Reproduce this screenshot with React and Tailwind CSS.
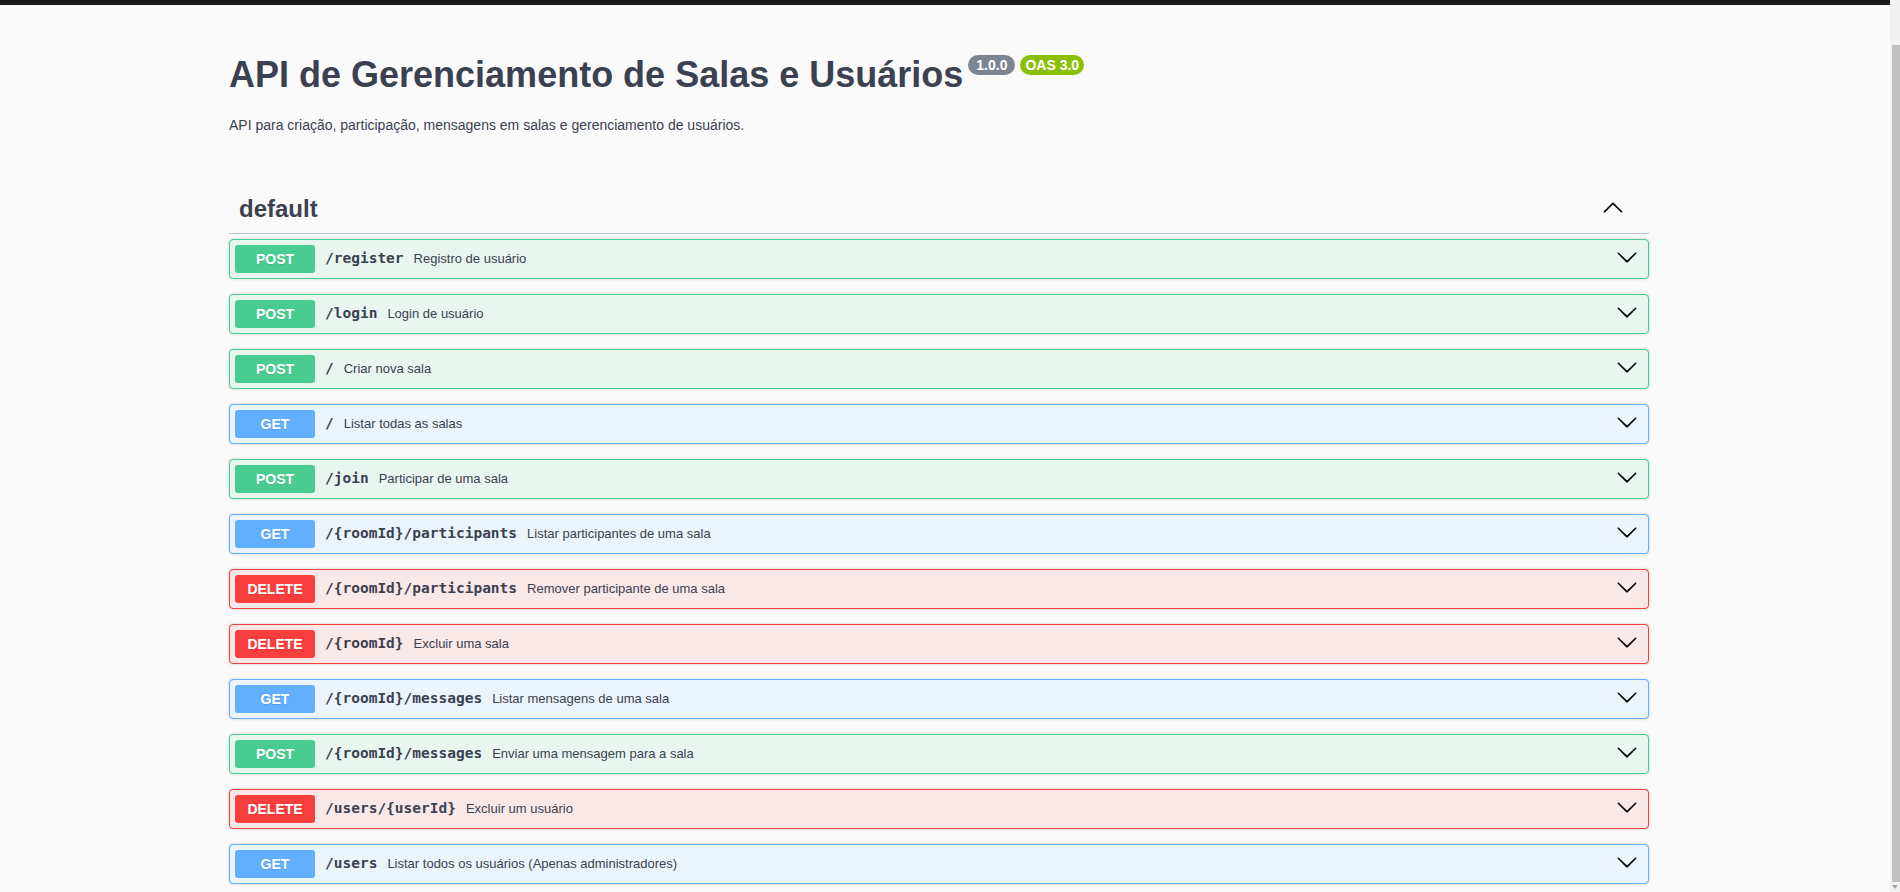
import React from "react";

const ops = [
  { m: "POST", p: "/register", d: "Registro de usuário" },
  { m: "POST", p: "/login", d: "Login de usuário" },
  { m: "POST", p: "/", d: "Criar nova sala" },
  { m: "GET", p: "/", d: "Listar todas as salas" },
  { m: "POST", p: "/join", d: "Participar de uma sala" },
  { m: "GET", p: "/{roomId}/participants", d: "Listar participantes de uma sala" },
  { m: "DELETE", p: "/{roomId}/participants", d: "Remover participante de uma sala" },
  { m: "DELETE", p: "/{roomId}", d: "Excluir uma sala" },
  { m: "GET", p: "/{roomId}/messages", d: "Listar mensagens de uma sala" },
  { m: "POST", p: "/{roomId}/messages", d: "Enviar uma mensagem para a sala" },
  { m: "DELETE", p: "/users/{userId}", d: "Excluir um usuário" },
  { m: "GET", p: "/users", d: "Listar todos os usuários (Apenas administradores)" },
];

const styles = {
  POST: { row: "border-[#49cc90] bg-[#e8f6f0]", btn: "bg-[#49cc90]" },
  GET: { row: "border-[#61affe] bg-[#ebf3fb]", btn: "bg-[#61affe]" },
  DELETE: { row: "border-[#f93e3e] bg-[#fae7e7]", btn: "bg-[#f93e3e]" },
};

function Down() {
  return (
    <svg width="22" height="22" viewBox="0 0 20 20" fill="#000" className="-mt-[5px]">
      <path d="M17.418 6.109c.272-.268.709-.268.979 0s.271.701 0 .969l-7.908 7.83c-.27.268-.707.268-.979 0l-7.908-7.83c-.27-.268-.27-.701 0-.969.271-.268.709-.268.979 0L10 13.25l7.418-7.141z" />
    </svg>
  );
}

function Up() {
  return (
    <svg width="22" height="22" viewBox="0 0 20 20" fill="#000" className="-mt-[4px]">
      <path d="M17.418 14.908c.272.268.709.268.979 0s.271-.701 0-.969l-7.908-7.83c-.27-.268-.707-.268-.979 0l-7.908 7.83c-.27.268-.27.701 0 .969.271.268.709.268.979 0L10 7.767l7.418 7.141z" />
    </svg>
  );
}

function Row({ m, p, d }) {
  const s = styles[m];
  return (
    <div
      className={`mb-[15px] flex h-[40px] shrink-0 items-center rounded-[4px] border pl-[5px] pr-[10px] shadow-[0_0_3px_rgba(0,0,0,0.19)] ${s.row}`}
    >
      <div
        className={`flex h-[28px] w-[80px] shrink-0 items-center justify-center rounded-[3px] text-[14px] font-bold text-white [text-shadow:0_1px_0_rgba(0,0,0,0.1)] ${s.btn}`}
      >
        {m}
      </div>
      <span className="px-[10px] font-['DejaVu_Sans_Mono',monospace] text-[14.5px] font-bold text-[#3b4151]">
        {p}
      </span>
      <span className="flex-1 text-[13px] text-[#3b4151]">{d}</span>
      <Down />
    </div>
  );
}

export default function App() {
  return (
    <div className="flex h-[892px] w-[1900px] overflow-hidden font-['Liberation_Sans',Arial,sans-serif]">
      <div className="flex min-h-0 flex-1 flex-col overflow-hidden bg-[#fafafa]">
        <div className="h-[5px] shrink-0 bg-[#1b1b1b]" />
        <div className="ml-[229px] flex w-[1420px] shrink-0 flex-col">
          <div className="mt-[50px] flex items-start">
            <h1 className="text-[36px] font-bold leading-[40px] text-[#3b4151]">
              API de Gerenciamento de Salas e Usuários
            </h1>
            <span className="ml-[5px] flex h-[20px] items-center rounded-full bg-[#7d8492] px-[8px] text-[14px] font-bold text-white">
              1.0.0
            </span>
            <span className="ml-[5px] flex h-[20px] items-center rounded-full bg-[#89bf04] px-[5px] text-[14px] font-bold text-white">
              OAS 3.0
            </span>
          </div>
          <p className="mt-[22px] text-[14px] leading-[16px] text-[#3b4151]">
            API para criação, participação, mensagens em salas e gerenciamento de usuários.
          </p>
          <div className="mt-[52px] mb-[5px] flex items-center border-b border-[#3b4151]/30 pb-[10px] pl-[10px] pr-[25px] pt-[10px]">
            <span className="flex-1 text-[24px] font-bold leading-[28px] text-[#3b4151]">default</span>
            <Up />
          </div>
          {ops.map((o, i) => (
            <Row key={i} {...o} />
          ))}
        </div>
      </div>
      <div className="flex w-[10px] flex-col bg-[#f1f1f1]">
        <div className="h-[45px]" />
        <div className="ml-[2px] flex-1 bg-[#c1c1c1]" />
        <div className="flex h-[10px] items-center justify-center">
          <div className="h-0 w-0 border-x-[3px] border-t-[4px] border-x-transparent border-t-[#a3a3a3]" />
        </div>
      </div>
    </div>
  );
}
